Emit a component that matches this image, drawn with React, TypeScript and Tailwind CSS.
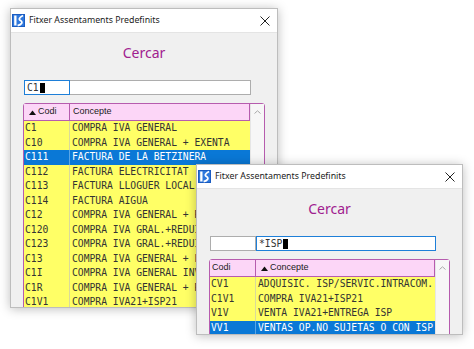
import React from "react";

type Row = { codi: string; concepte: string; selected?: boolean };
type SortKey = "codi" | "concepte";

const rowsMain: Row[] = [
  { codi: "C1", concepte: "COMPRA IVA GENERAL" },
  { codi: "C10", concepte: "COMPRA IVA GENERAL + EXENTA" },
  { codi: "C111", concepte: "FACTURA DE LA BETZINERA", selected: true },
  { codi: "C112", concepte: "FACTURA ELECTRICITAT" },
  { codi: "C113", concepte: "FACTURA LLOGUER LOCAL" },
  { codi: "C114", concepte: "FACTURA AIGUA" },
  { codi: "C12", concepte: "COMPRA IVA GENERAL + REDUIT" },
  { codi: "C120", concepte: "COMPRA IVA GRAL.+REDUIT" },
  { codi: "C123", concepte: "COMPRA IVA GRAL.+REDUIT" },
  { codi: "C13", concepte: "COMPRA IVA GENERAL + EXEMPT" },
  { codi: "C1I", concepte: "COMPRA IVA GENERAL INVERSIO" },
  { codi: "C1R", concepte: "COMPRA IVA GENERAL + REC." },
  { codi: "C1V1", concepte: "COMPRA IVA21+ISP21" },
];

const rowsIsp: Row[] = [
  { codi: "CV1", concepte: "ADQUISIC. ISP/SERVIC.INTRACOM." },
  { codi: "C1V1", concepte: "COMPRA IVA21+ISP21" },
  { codi: "V1V", concepte: "VENTA IVA21+ENTREGA ISP" },
  { codi: "VV1", concepte: "VENTAS OP.NO SUJETAS O CON ISP", selected: true },
];

const AppIcon = () => (
  <svg width="13" height="13" viewBox="0 0 13 13" className="shrink-0">
    <rect width="13" height="13" fill="#1a5cc2" />
    <rect x="1" y="1" width="11" height="11" fill="#2f78dc" />
    <path d="M2.2 1.5h2.3v10H2.2z" fill="#fff" />
    <path d="M11 1.6 C7.2 3.6 6.2 5.4 8.8 6.8 C11 8 10 10.6 5.6 11.6" stroke="#fff" strokeWidth="1.7" fill="none" />
  </svg>
);

const CloseIcon = () => (
  <svg width="10" height="10" viewBox="0 0 10 10" className="shrink-0">
    <path d="M0.5 0.5 L9.5 9.5 M9.5 0.5 L0.5 9.5" stroke="#222" strokeWidth="1" />
  </svg>
);

const SortArrow = () => (
  <svg width="7" height="5" viewBox="0 0 7 5" className="mr-[2px] shrink-0">
    <path d="M0 5 L3.5 0.5 L7 5 Z" fill="#111" />
  </svg>
);

const Chevron = () => (
  <svg width="7" height="4" viewBox="0 0 7 4">
    <path d="M0.5 3.5 L3.5 0.8 L6.5 3.5" stroke="#a8a8a8" strokeWidth="1" fill="none" />
  </svg>
);

type WindowProps = {
  className: string;
  code: string;
  concept: string;
  focus: SortKey;
  sortBy: SortKey;
  rows: Row[];
};

function SearchWindow({ className, code, concept, focus, sortBy, rows }: WindowProps) {
  const cursor = <span className="ml-px inline-block h-[10px] w-[5px] bg-black align-middle" />;
  return (
    <div
      className={`absolute flex flex-col overflow-hidden border border-[#bdbdbd] bg-[#f0f0f0] shadow-[0_1px_10px_rgba(0,0,0,0.26)] ${className}`}
    >
      <div className="flex h-6 shrink-0 items-center border-b border-[#e4e4e4] bg-white pl-[1px] pr-[7px]">
        <AppIcon />
        <span className="ml-[4px] font-['Noto_Sans',sans-serif] text-[8.8px] text-[#1a1a1a]">
          Fitxer Assentaments Predefinits
        </span>
        <div className="ml-auto">
          <CloseIcon />
        </div>
      </div>

      <div className="flex flex-col px-3 font-['DejaVu_Sans_Mono',monospace] text-[9.7px] text-[#333]">
        <div className="mt-[10px] h-5 text-center font-['Noto_Sans',sans-serif] text-[14px] leading-5 text-[#a0208f]">
          Cercar
        </div>

        <div className="mt-[17px] mr-[14px] ml-px flex h-[15px]">
          <div
            className={`flex w-[46px] items-center bg-white pl-[2px] leading-none border ${
              focus === "codi" ? "border-[#1e7fd8]" : "border-[#adadad]"
            }`}
          >
            {code}
            {focus === "codi" && cursor}
          </div>
          <div
            className={`flex flex-1 items-center bg-white pl-[2px] leading-none border ${
              focus === "concepte" ? "border-[#1e7fd8]" : "border-l-0 border-[#adadad]"
            }`}
          >
            {concept}
            {focus === "concepte" && cursor}
          </div>
        </div>

        <div className="mt-[8px] flex rounded-t-[3px] border border-[#b65cae]">
          <div className="flex min-w-0 flex-1 flex-col">
            <div className="flex h-[17px] border-b border-[#b65cae] bg-[#fcd6f7] font-['Liberation_Sans',sans-serif] text-[9px] text-[#1a1a1a]">
              <div
                className={`flex w-[46px] shrink-0 items-center border-r border-[#b65cae] ${
                  sortBy === "codi" ? "pl-[5px]" : "pl-[2px]"
                }`}
              >
                {sortBy === "codi" && <SortArrow />}
                Codi
              </div>
              <div
                className={`flex flex-1 items-center border-r border-[#b65cae] ${
                  sortBy === "concepte" ? "pl-[5px]" : "pl-[3px]"
                }`}
              >
                {sortBy === "concepte" && <SortArrow />}
                Concepte
              </div>
            </div>
            {rows.map((r) => (
              <div
                key={r.codi + r.concepte}
                className={`flex h-[14.5px] shrink-0 leading-none ${
                  r.selected ? "bg-[#0a78d6] text-white" : "bg-[#ffff66] text-[#333]"
                }`}
              >
                <div
                  className={`flex w-[46px] shrink-0 items-center border-r pl-[1px] ${
                    r.selected ? "border-[#5aa6e6]" : "border-[#dada9a]"
                  }`}
                >
                  {r.codi}
                </div>
                <div className="flex flex-1 items-center overflow-hidden whitespace-nowrap pl-[2px]">
                  {r.concepte}
                </div>
              </div>
            ))}
          </div>
          <div className="flex w-[14px] shrink-0 justify-center border-l border-[#e6e6e6] bg-[#f7f7f7] pt-[6px]">
            <Chevron />
          </div>
        </div>
      </div>
    </div>
  );
}

export default function App() {
  return (
    <div className="relative h-[349px] w-[474px] overflow-hidden bg-white">
      <SearchWindow
        className="left-[10px] top-[8px] h-[300px] w-[268px]"
        code="C1"
        concept=""
        focus="codi"
        sortBy="codi"
        rows={rowsMain}
      />
      <SearchWindow
        className="left-[196px] top-[164px] h-[171px] w-[267px]"
        code=""
        concept="*ISP"
        focus="concepte"
        sortBy="concepte"
        rows={rowsIsp}
      />
    </div>
  );
}
